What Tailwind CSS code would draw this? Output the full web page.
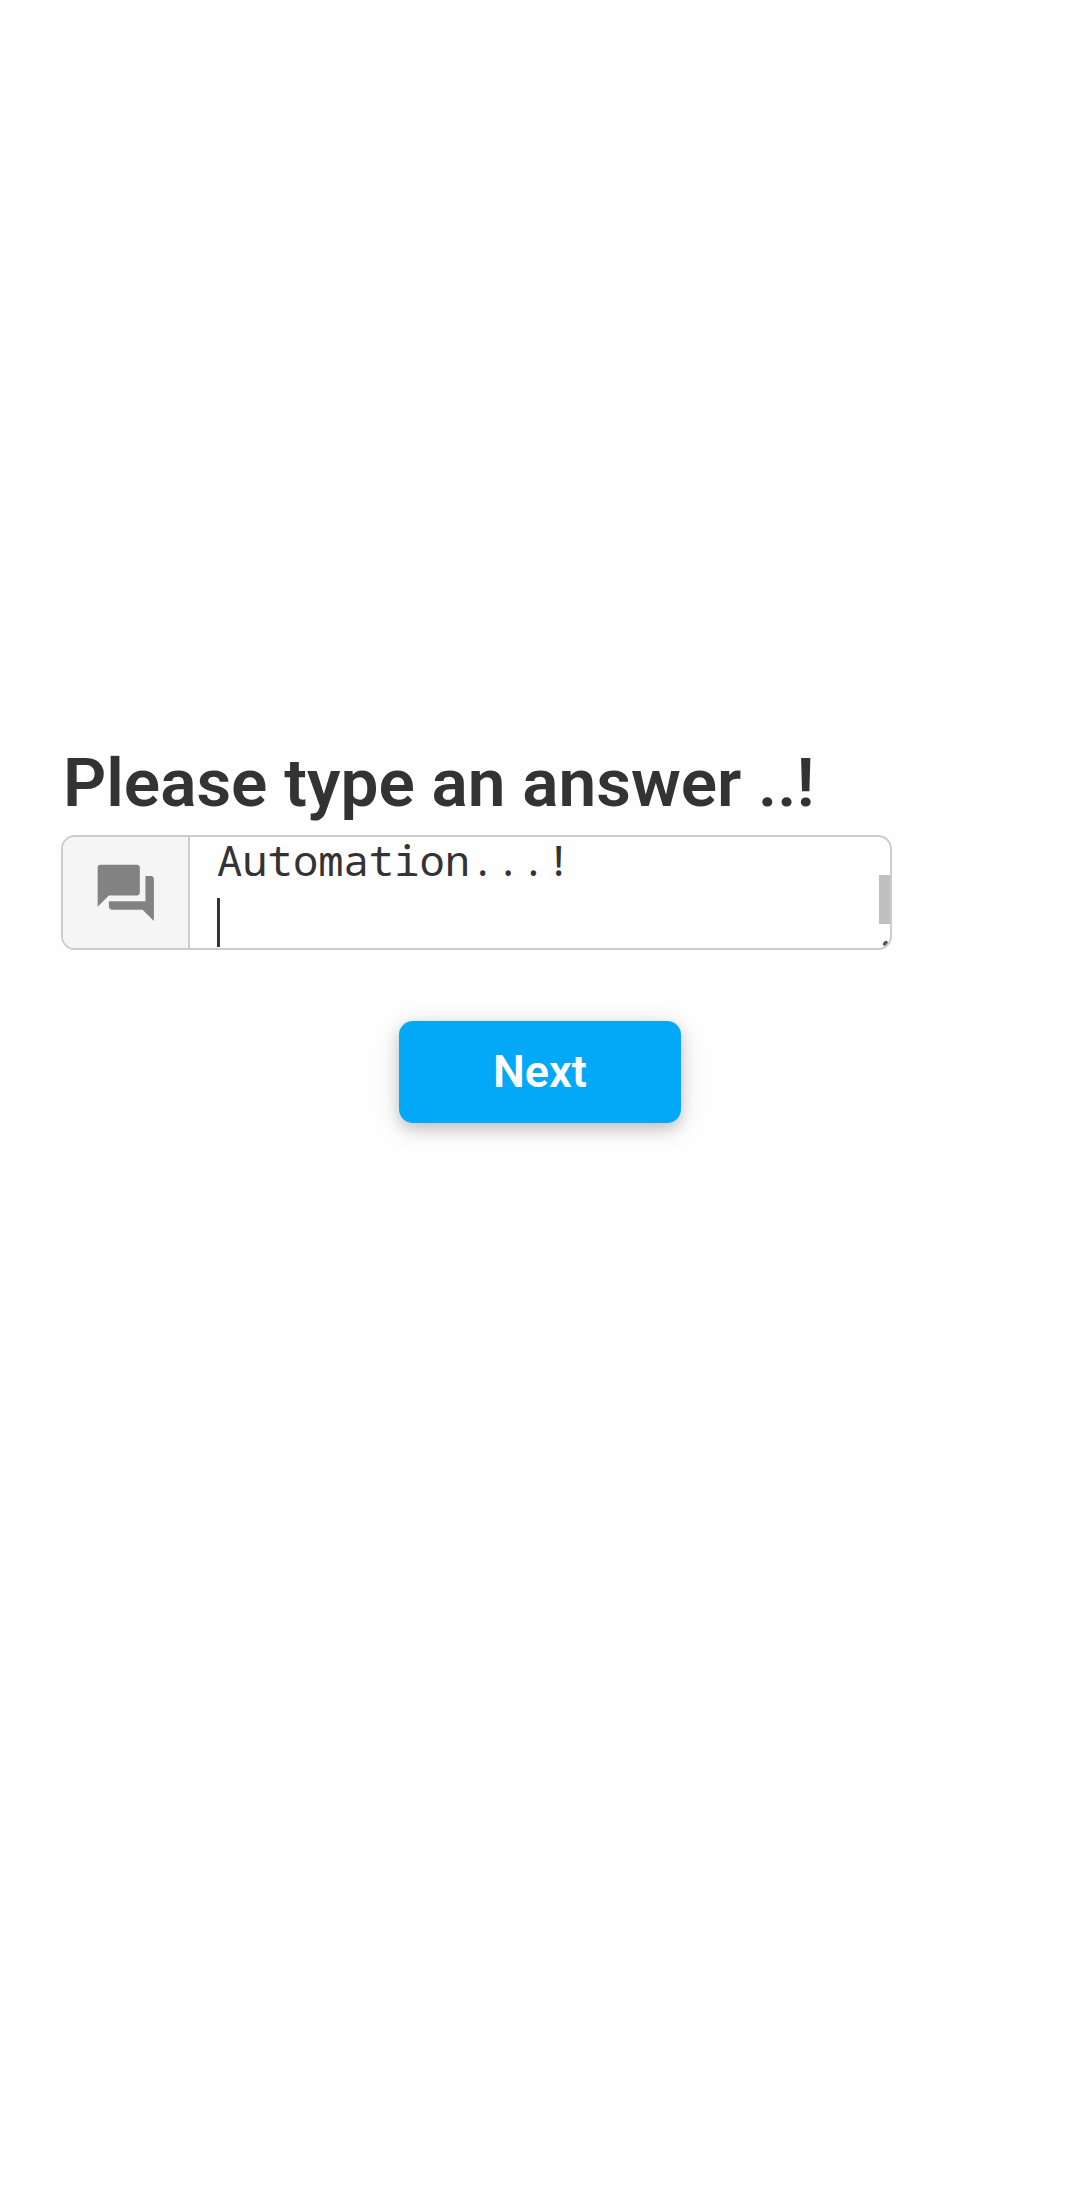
<!DOCTYPE html>
<html lang="en">
<head>
<meta charset="utf-8">
<title>Question</title>
<script src="https://cdn.jsdelivr.net/npm/@tailwindcss/browser@4"></script>
</head>
<body class="min-h-[2208px] overflow-hidden bg-[#fefefe] pt-[743px] font-['Roboto',sans-serif] text-[#333333]">
  <h1 class="ml-[61px] pl-0.5 h-[92px] text-[67.5px] leading-[80px] font-semibold whitespace-nowrap">Please type an answer ..!</h1>
  <div class="relative ml-[61px] flex h-[115px] w-[831px] overflow-hidden rounded-[14px] border-2 border-[#cccccc] bg-[#fefefe]">
    <div class="flex w-[127px] shrink-0 items-center justify-center border-r-2 border-[#cccccc] bg-[#f5f5f5]">
      <svg class="size-[67.5px]" viewBox="0 0 24 24" fill="#828282"><path d="M21 6h-2v9H6v2c0 .55.45 1 1 1h11l4 4V7c0-.55-.45-1-1-1zm-4 6V3c0-.55-.45-1-1-1H3c-.55 0-1 .45-1 1v14l4-4h10c.55 0 1-.45 1-1z"/></svg>
    </div>
    <div class="flex flex-col items-start pl-[27px] font-['Droid_Sans_Mono','Noto_Sans_Mono','DejaVu_Sans_Mono',monospace] text-[42.2px] leading-[46px]">
      <div class="h-[61px]">Automation...!</div>
      <div class="h-[49px] w-[3px] bg-[#333333]"></div>
    </div>
    <div class="absolute top-[38px] right-0 h-[49px] w-[11px] bg-[#c0c0c0]"></div>
    <svg class="absolute right-0 bottom-0 size-[10px]" viewBox="0 0 10 10"><path d="M4.7 6 6 4.7" stroke="#555555" stroke-width="3.8" stroke-linecap="round"/></svg>
  </div>
  <button class="mx-auto mt-[71px] flex h-[102px] w-[282px] items-center justify-center rounded-[14px] bg-[#03a9f6] text-[45px] font-semibold text-white shadow-[0_5.6px_14px_rgba(0,0,0,0.16),0_5.6px_28px_rgba(0,0,0,0.12)]">Next</button>
</body>
</html>
